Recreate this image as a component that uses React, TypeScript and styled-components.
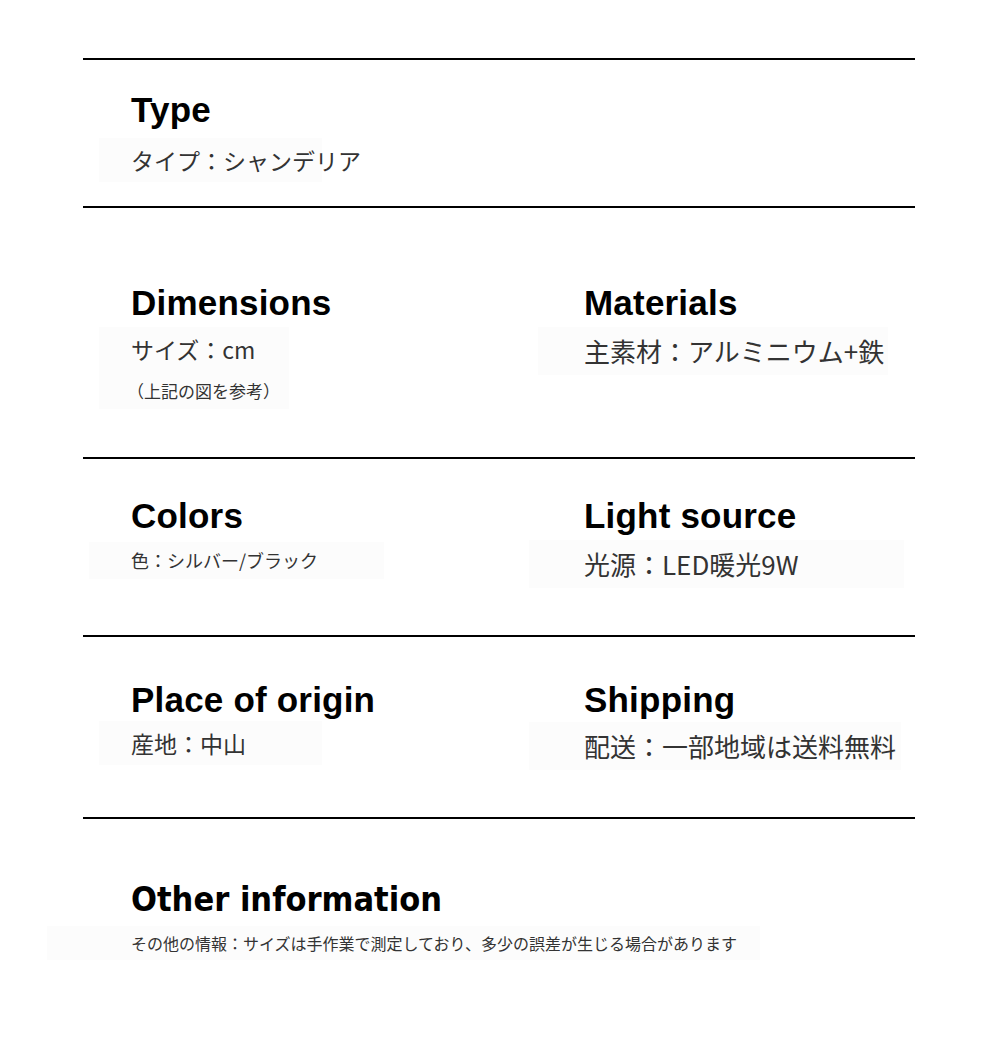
import React from "react";
import styled, { createGlobalStyle } from "styled-components";

const Global = createGlobalStyle`
  html, body { margin: 0; padding: 0; background: #ffffff; }
  body { font-family: "Liberation Sans", Arial, sans-serif; }
`;

const Page = styled.div`
  width: 1000px;
  min-height: 1049px;
  padding-top: 58px;
  box-sizing: border-box;
  background: #fff;
`;

const Sheet = styled.div`
  width: 832px;
  margin-left: 83px;
`;

const Section = styled.section<{ $h: number; $pt: number }>`
  box-sizing: border-box;
  height: ${(p) => p.$h}px;
  padding: ${(p) => p.$pt}px 0 0 48px;
  border-top: 2px solid #000;
  display: grid;
  grid-template-columns: 453px 1fr;
  align-items: start;
`;

const Cell = styled.div`
  display: flex;
  flex-direction: column;
  align-items: flex-start;
`;

const Heading = styled.h2<{ $narrow?: boolean; $gap?: number }>`
  margin: 0 0 ${(p) => p.$gap ?? 10}px 0;
  font-family: ${(p) =>
    p.$narrow
      ? '"DejaVu Sans Condensed", "DejaVu Sans", sans-serif'
      : '"Liberation Sans", Arial, sans-serif'};
  font-weight: 700;
  font-size: ${(p) => (p.$narrow ? 34 : 35)}px;
  line-height: 40px;
  color: #000;
  letter-spacing: ${(p) => (p.$narrow ? "0px" : "0.2px")};
  white-space: nowrap;
`;

const Shade = styled.div<{ $w: number; $l: number }>`
  background: #fcfcfc;
  margin-left: -${(p) => p.$l}px;
  padding: 6px 0 6px ${(p) => p.$l}px;
  margin-top: -6px;
  width: ${(p) => p.$w}px;
  box-sizing: border-box;
`;

const Value = styled.div<{ $size: number }>`
  font-family: "Noto Sans CJK JP", "Noto Sans", sans-serif;
  font-size: ${(p) => p.$size}px;
  line-height: 1.4;
  color: #333;
  white-space: nowrap;
`;

const Note = styled(Value)`
  margin-top: 14px;
  margin-left: -4px;
`;

export default function App() {
  return (
    <Page>
      <Global />
      <Sheet>
        <Section $h={148} $pt={30}>
          <Cell>
            <Heading $gap={14}>Type</Heading>
            <Shade $w={223} $l={32}>
              <Value $size={23}>タイプ：シャンデリア</Value>
            </Shade>
          </Cell>
        </Section>
        <Section $h={251} $pt={75}>
          <Cell>
            <Heading>Dimensions</Heading>
            <Shade $w={190} $l={32}>
              <Value $size={23}>サイズ：cm</Value>
              <Note $size={17}>（上記の図を参考）</Note>
            </Shade>
          </Cell>
          <Cell>
            <Heading>Materials</Heading>
            <Shade $w={350} $l={46}>
              <Value $size={26}>主素材：アルミニウム+鉄</Value>
            </Shade>
          </Cell>
        </Section>
        <Section $h={178} $pt={37}>
          <Cell>
            <Heading $gap={12}>Colors</Heading>
            <Shade $w={295} $l={42}>
              <Value $size={18}>色：シルバー/ブラック</Value>
            </Shade>
          </Cell>
          <Cell>
            <Heading>Light source</Heading>
            <Shade $w={375} $l={55}>
              <Value $size={26}>光源：LED暖光9W</Value>
            </Shade>
          </Cell>
        </Section>
        <Section $h={182} $pt={43}>
          <Cell>
            <Heading $gap={7}>Place of origin</Heading>
            <Shade $w={223} $l={32}>
              <Value $size={23}>産地：中山</Value>
            </Shade>
          </Cell>
          <Cell>
            <Heading $gap={8}>Shipping</Heading>
            <Shade $w={372} $l={55}>
              <Value $size={26}>配送：一部地域は送料無料</Value>
            </Shade>
          </Cell>
        </Section>
        <Section $h={230} $pt={60}>
          <Cell>
            <Heading $narrow $gap={13}>Other information</Heading>
            <Shade $w={713} $l={84}>
              <Value $size={16}>その他の情報：サイズは手作業で測定しており、多少の誤差が生じる場合があります</Value>
            </Shade>
          </Cell>
        </Section>
      </Sheet>
    </Page>
  );
}
